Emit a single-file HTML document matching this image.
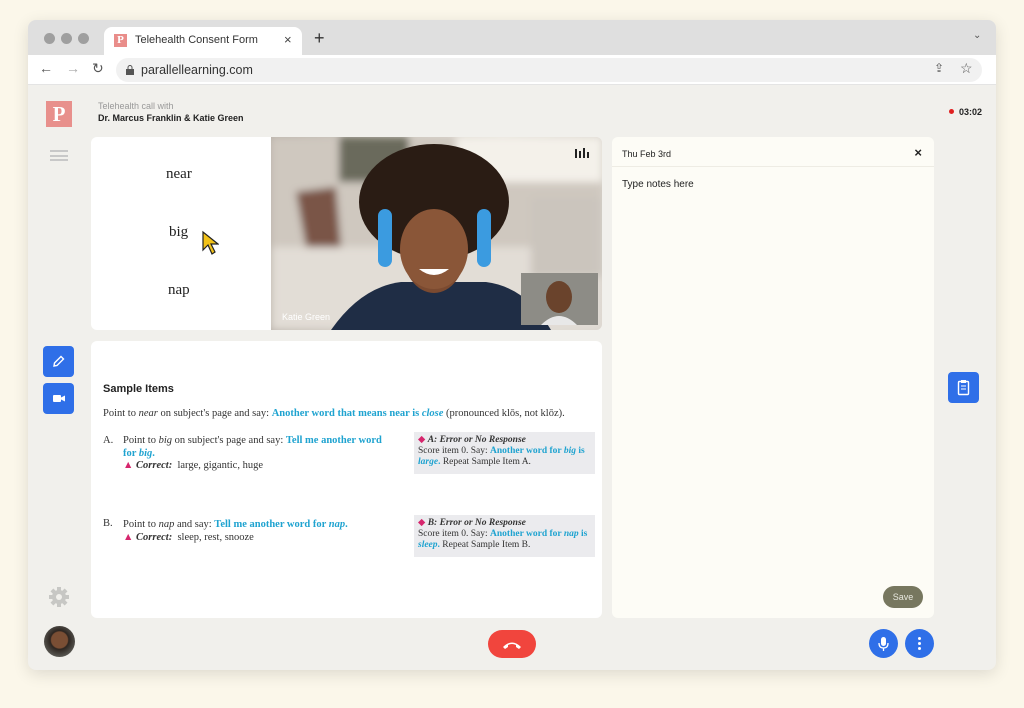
<!DOCTYPE html>
<html><head><meta charset="utf-8"><style>
*{margin:0;padding:0;box-sizing:border-box}
body{width:1024px;height:708px;background:#fbf7ea;font-family:"Liberation Sans",sans-serif;position:relative;overflow:hidden}
.win{position:absolute;left:28px;top:20px;width:968px;height:650px;border-radius:8px;background:#f1f0ec;overflow:hidden;box-shadow:0 4px 16px rgba(0,0,0,.12)}
.tabbar{position:absolute;left:0;top:0;width:100%;height:35px;background:#dfdfdf}
.dot{position:absolute;top:13px;width:11px;height:11px;border-radius:50%;background:#9f9f9f}
.tab{position:absolute;left:76px;top:7px;width:198px;height:28px;background:#fff;border-radius:8px 8px 0 0}
.addr{position:absolute;left:0;top:35px;width:100%;height:30px;background:#fff;border-bottom:1px solid #e4e4e4}
.url{position:absolute;left:88px;top:3px;width:866px;height:24px;background:#f1f1f1;border-radius:12px;font-size:12.5px;color:#333;line-height:24px;padding-left:25px}
.p{position:absolute;background:#fff;border-radius:6px}
.serif{font-family:"Liberation Serif",serif}
.bl{color:#1fa3d0;font-weight:bold}
.btn{position:absolute;background:#2f6fe8;border-radius:4px}
.circ{position:absolute;border-radius:50%;background:#2f6fe8}
</style></head><body>
<div class="win">
 <div class="tabbar">
  <div class="dot" style="left:16px"></div><div class="dot" style="left:33px"></div><div class="dot" style="left:50px"></div>
  <div class="tab">
   <div style="position:absolute;left:10px;top:7px;width:13px;height:13px;background:#e98d8a;color:#fff;font:bold 11px 'Liberation Serif',serif;text-align:center;line-height:13px">P</div>
   <div style="position:absolute;left:31px;top:7px;font-size:11px;color:#333">Telehealth Consent Form</div>
   <div style="position:absolute;left:180px;top:5px;font-size:13px;color:#444">×</div>
  </div>
  <div style="position:absolute;left:286px;top:8px;font-size:18px;color:#333">+</div>
  <div style="position:absolute;left:945px;top:10px;font-size:10px;color:#555">⌄</div>
 </div>
 <div class="addr">
  <div style="position:absolute;left:11px;top:5px;font-size:14px;color:#555">←</div>
  <div style="position:absolute;left:38px;top:5px;font-size:14px;color:#aaa">→</div>
  <div style="position:absolute;left:64px;top:5px;font-size:14px;color:#555">↻</div>
  <div class="url"><svg style="position:absolute;left:10px;top:7px" width="8" height="10"><rect x="0" y="4" width="8" height="6" fill="#555"/><path d="M2 4V2.5a2 2 0 014 0V4" stroke="#555" fill="none"/></svg>parallellearning.com</div>
  <div style="position:absolute;left:906px;top:6px;font-size:12px;color:#555">⇪</div>
  <div style="position:absolute;left:932px;top:5px;font-size:14px;color:#555">☆</div>
 </div>
 <div style="position:absolute;left:18px;top:81px;width:26px;height:26px;background:#e8908c;color:#fff;font:bold 21px 'Liberation Serif',serif;text-align:center;line-height:27px">P</div>
 <div style="position:absolute;left:70px;top:81px;font-size:9px;color:#999">Telehealth call with</div>
 <div style="position:absolute;left:70px;top:93px;font-size:9px;font-weight:bold;color:#222">Dr. Marcus Franklin &amp; Katie Green</div>
 <div style="position:absolute;left:921px;top:89px;width:5px;height:5px;border-radius:50%;background:#e02020"></div>
 <div style="position:absolute;left:931px;top:87px;font-size:9px;font-weight:bold;color:#222">03:02</div>
 <div style="position:absolute;left:22px;top:130px;width:18px;height:11px;border-top:2px solid #c8c8c8;border-bottom:2px solid #c8c8c8"><div style="margin-top:3px;height:2px;background:#c8c8c8"></div></div>
 <div class="p" style="left:63px;top:117px;width:181px;height:193px;border-radius:6px 0 0 6px">
  <div class="serif" style="position:absolute;left:75px;top:29px;font-size:15px;color:#222">near</div>
  <div class="serif" style="position:absolute;left:78px;top:87px;font-size:15px;color:#222">big</div>
  <div class="serif" style="position:absolute;left:77px;top:145px;font-size:15px;color:#222">nap</div>
  <svg style="position:absolute;left:110px;top:93px" width="18" height="26"><path d="M2 2L2 20L7 15L11 24L14 22L10 14L17 14Z" fill="#f2c218" stroke="#222" stroke-width="1.2"/></svg>
 </div>
 <div style="position:absolute;left:243px;top:117px;width:331px;height:193px;border-radius:0 6px 6px 0;overflow:hidden;background:linear-gradient(90deg,#b9b2aa 0%,#d6d0c8 40%,#e6e2dc 70%,#d8d3cc 100%)">
  <svg width="331" height="193" style="position:absolute;left:0;top:0">
   <defs><filter id="b"><feGaussianBlur stdDeviation="4"/></filter></defs>
   <g filter="url(#b)">
    <rect x="0" y="0" width="331" height="110" fill="#cfc8bf"/>
    <rect x="68" y="0" width="70" height="45" fill="#6b6b5c"/>
    <rect x="185" y="0" width="146" height="45" fill="#f4f1ea"/>
    <rect x="0" y="110" width="331" height="83" fill="#e2ddd6"/>
    <path d="M25 55L65 50L70 110L35 110Z" fill="#7a5546"/>
    <rect x="260" y="60" width="71" height="80" fill="#cbc5bd"/>
   </g>
   <path d="M60 193Q90 150 130 145L215 145Q255 150 280 193Z" fill="#1f2d45"/>
   <ellipse cx="163" cy="112" rx="32" ry="44" fill="#7b4a30"/>
   <ellipse cx="163" cy="65" rx="75" ry="58" fill="#2a1c14"/>
   <ellipse cx="163" cy="112" rx="34" ry="40" fill="#8a5638"/>
   <path d="M148 132Q163 144 178 132Z" fill="#fff"/>
   <rect x="107" y="72" width="14" height="58" rx="7" fill="#3b9be0"/>
   <rect x="206" y="72" width="14" height="58" rx="7" fill="#3b9be0"/>
   <rect x="250" y="136" width="77" height="52" fill="#8d8c86"/>
   <ellipse cx="288" cy="160" rx="13" ry="16" fill="#6a432c"/>
   <path d="M270 188Q288 170 306 188Z" fill="#e8e8e8"/>
   <rect x="304" y="12" width="2" height="9" fill="#222"/><rect x="308" y="14" width="2" height="7" fill="#222"/><rect x="312" y="11" width="2" height="10" fill="#222"/><rect x="316" y="15" width="2" height="6" fill="#222"/>
  </svg>
  <div style="position:absolute;left:11px;top:175px;font-size:9px;color:#fff">Katie Green</div>
 </div>
 <div class="p serif" style="left:63px;top:321px;width:511px;height:277px;color:#333;font-size:10.5px">
  <div style="position:absolute;left:12px;top:42px;font:bold 11px 'Liberation Sans',sans-serif;color:#222">Sample Items</div>
  <div style="position:absolute;left:12px;top:67px;white-space:nowrap">Point to <i>near</i> on subject's page and say: <span class="bl">Another word that means near is <i>close</i></span> (pronounced klōs, not klōz).</div>
  <div style="position:absolute;left:12px;top:94px">A.</div>
  <div style="position:absolute;left:32px;top:94px;width:270px;line-height:12.5px">Point to <i>big</i> on subject's page and say: <span class="bl">Tell me another word for <i>big</i>.</span><br><span style="color:#d6266d">▲</span> <b><i>Correct:</i></b>&nbsp; large, gigantic, huge</div>
  <div style="position:absolute;left:323px;top:91px;width:181px;height:42px;background:#ebebee;padding:3px 4px;line-height:11px;font-size:9.5px"><span style="color:#d6266d">◆</span> <b><i>A: Error or No Response</i></b><br>Score item 0. Say: <span class="bl">Another word for <i>big</i> is <i>large</i>.</span> Repeat Sample Item A.</div>
  <div style="position:absolute;left:12px;top:177px">B.</div>
  <div style="position:absolute;left:32px;top:177px;width:270px;line-height:13px">Point to <i>nap</i> and say: <span class="bl">Tell me another word for <i>nap</i>.</span><br><span style="color:#d6266d">▲</span> <b><i>Correct:</i></b>&nbsp; sleep, rest, snooze</div>
  <div style="position:absolute;left:323px;top:174px;width:181px;height:42px;background:#ebebee;padding:3px 4px;line-height:11px;font-size:9.5px"><span style="color:#d6266d">◆</span> <b><i>B: Error or No Response</i></b><br>Score item 0. Say: <span class="bl">Another word for <i>nap</i> is <i>sleep</i>.</span> Repeat Sample Item B.</div>
 </div>
 <div style="position:absolute;left:584px;top:117px;width:322px;height:481px;background:#fdfcf6;border-radius:6px">
  <div style="position:absolute;left:0;top:0;width:100%;height:30px;border-bottom:1px solid #eeece4;font-size:9px;color:#222;padding:12px 10px">Thu Feb 3rd</div>
  <div style="position:absolute;right:12px;top:8px;font-size:13px;font-weight:bold;color:#222">×</div>
  <div style="position:absolute;left:10px;top:42px;font-size:10px;color:#222">Type notes here</div>
  <div style="position:absolute;left:271px;top:449px;width:40px;height:22px;border-radius:11px;background:#77775f;color:#e8e8df;font-size:9px;text-align:center;line-height:22px">Save</div>
 </div>
 <div class="btn" style="left:15px;top:326px;width:31px;height:31px"><svg width="31" height="31"><path d="M11 20L11.5 17L18 10.5L20.5 13L14 19.5Z" fill="none" stroke="#fff" stroke-width="1.4"/></svg></div>
 <div class="btn" style="left:15px;top:363px;width:31px;height:31px"><svg width="31" height="31"><rect x="10" y="12" width="8" height="7" rx="1" fill="#fff"/><path d="M18 14.5L22 12.5V18.5L18 16.5Z" fill="#fff"/></svg></div>
 <svg style="position:absolute;left:21px;top:567px" width="20" height="20"><g fill="#c7c7c4"><circle cx="10" cy="10" r="7"/><rect x="8" y="0" width="4" height="20"/><rect x="0" y="8" width="20" height="4"/><rect x="8" y="0" width="4" height="20" transform="rotate(45 10 10)"/><rect x="8" y="0" width="4" height="20" transform="rotate(-45 10 10)"/></g><circle cx="10" cy="10" r="3" fill="#f1f0ec"/></svg>
 <div style="position:absolute;left:16px;top:606px;width:31px;height:31px;border-radius:50%;background:radial-gradient(circle at 50% 45%,#7a4e34 0 35%,#2d2520 40%,#5b5a55 75%)"></div>
 <div class="btn" style="left:920px;top:352px;width:31px;height:31px"><svg width="31" height="31"><rect x="10.5" y="9.5" width="10" height="13" rx="1" fill="none" stroke="#fff" stroke-width="1.4"/><path d="M13 14H18M13 17H18" stroke="#fff"/><rect x="13" y="8" width="5" height="3" fill="#fff"/></svg></div>
 <div style="position:absolute;left:460px;top:610px;width:48px;height:28px;border-radius:14px;background:#f1453d"><svg width="48" height="28"><path d="M15 17Q24 8 33 17L31 19L28 17V15Q24 13 20 15V17L17 19Z" fill="#fff"/></svg></div>
 <div class="circ" style="left:841px;top:609px;width:29px;height:29px"><svg width="29" height="29"><rect x="12" y="8" width="5" height="9" rx="2.5" fill="#fff"/><path d="M10 14Q10 19 14.5 19Q19 19 19 14M14.5 19V22" stroke="#fff" fill="none" stroke-width="1.3"/></svg></div>
 <div class="circ" style="left:877px;top:609px;width:29px;height:29px"><svg width="29" height="29"><circle cx="14.5" cy="9.5" r="1.5" fill="#fff"/><circle cx="14.5" cy="14.5" r="1.5" fill="#fff"/><circle cx="14.5" cy="19.5" r="1.5" fill="#fff"/></svg></div>
</div>
</body></html>
